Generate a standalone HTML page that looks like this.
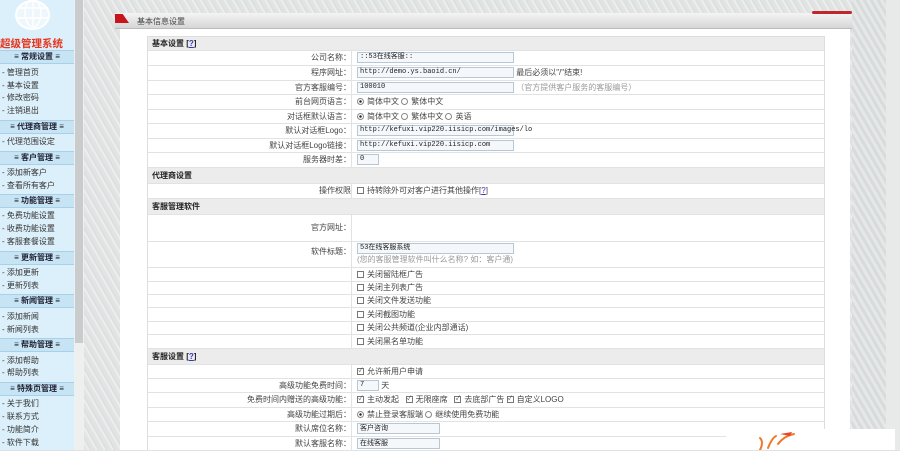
<!DOCTYPE html>
<html><head><meta charset="utf-8">
<style>
*{margin:0;padding:0;box-sizing:border-box}
body{width:900px;height:450px;overflow:hidden;position:relative;background:#e0e2e2;font-family:"Liberation Sans","Noto Sans CJK SC",sans-serif;font-size:8px;color:#444}
.tex{position:absolute;background:repeating-linear-gradient(60deg,#e2e4e4 0 3px,#eceeee 3px 5px,#dde0e0 5px 7px)}
#side{position:absolute;left:0;top:0;width:74px;height:450px;background:#dcf0fb}
#sb{position:absolute;left:74px;top:0;width:10px;height:450px;background:#eef0f0}
#sbt{position:absolute;left:75px;top:0;width:8px;height:343px;background:#c9cccc}
.sh{position:absolute;left:0;width:74px;height:14px;background:#c6e4f4;border-top:1px solid #a8d0e8;border-bottom:1px solid #a8d0e8;font-weight:bold;text-align:center;line-height:12px;font-size:8px;color:#223}
.si{position:absolute;left:2px;font-size:8px;color:#333;line-height:10px}
#panel{position:absolute;left:120px;top:29px;width:730px;height:421px;background:#fff}
#hdr{position:absolute;left:115px;top:13px;width:737px;height:16px;background:linear-gradient(#f4f4f4,#d6d6d6);border-bottom:1px solid #bbb}
.row{position:absolute;left:147px;width:678px;border-bottom:1px solid #e2e2e2;border-left:1px solid #ddd;border-right:1px solid #ddd;background:#fff}
.hd{background:#ececec;font-weight:bold;padding-left:4px;font-size:8px;color:#222}
.lb{position:absolute;left:0;width:203px;text-align:right;top:0;color:#444}
.vl{position:absolute;left:203px;top:0;bottom:0;border-left:1px solid #e2e2e2;padding-left:5px;white-space:nowrap}
.in{display:inline-block;border:1px solid #b7c7d6;background:#f4f8fb;height:11px;vertical-align:middle;font-family:"Liberation Mono","Noto Sans CJK SC",monospace;font-size:7px;line-height:9px;padding-left:2px;color:#222}
.cb{display:inline-block;width:7px;height:7px;border:1px solid #777;background:#fff;vertical-align:middle;margin-right:3px;font-size:6px;line-height:5px;text-align:center}
.rd{display:inline-block;width:7px;height:7px;border:1px solid #888;border-radius:50%;vertical-align:middle;margin-right:3px;background:#fff}
.rd.on{background:radial-gradient(#222 30%,#fff 40%)}
.g{color:#999}
.q{color:#33c;text-decoration:underline}
</style></head><body>
<div class="tex" style="left:84px;top:0;width:816px;height:450px"></div>
<div class="tex" style="left:852px;top:0;width:34px;height:450px;background:repeating-linear-gradient(60deg,#d8dbdb 0 3px,#e6e8e8 3px 6px)"></div>
<div style="position:absolute;left:886px;top:0;width:14px;height:450px;background:#e8eaea"></div>
<div id="panel"></div>
<div id="hdr"><div style="position:absolute;left:0;top:1px;width:14px;height:9px;background:#c8141b;clip-path:polygon(0 0,55% 0,100% 100%,0 100%)"></div><span style="position:absolute;left:22px;top:3px;color:#444">基本信息设置</span></div>
<div style="position:absolute;left:812px;top:11px;width:40px;height:3px;background:#c0272d;border-radius:2px"></div>

<div id="side">
<div style="position:absolute;left:15px;top:0;width:35px;height:30px;border-radius:50%;background:#eef7fc;border:2px solid #fff"></div>
<svg style="position:absolute;left:15px;top:0" width="36" height="30"><g fill="none" stroke="#fff" stroke-width="1.5"><ellipse cx="18" cy="13" rx="8" ry="14"/><line x1="18" y1="0" x2="18" y2="28"/><line x1="3" y1="8" x2="33" y2="8"/><line x1="2" y1="18" x2="34" y2="18"/></g></svg>
<div style="position:absolute;left:0;top:36px;font-size:10.5px;font-weight:bold;color:#e8341c;white-space:nowrap">超级管理系统</div>
<div class="sh" style="top:50px">≡ 常规设置 ≡</div>
<div class="si" style="top:68px">- 管理首页</div><div class="si" style="top:81px">- 基本设置</div><div class="si" style="top:93px">- 修改密码</div><div class="si" style="top:106px">- 注销退出</div>
<div class="sh" style="top:120px">≡ 代理商管理 ≡</div>
<div class="si" style="top:137px">- 代理范围设定</div>
<div class="sh" style="top:151px">≡ 客户管理 ≡</div>
<div class="si" style="top:168px">- 添加新客户</div><div class="si" style="top:181px">- 查看所有客户</div>
<div class="sh" style="top:194px">≡ 功能管理 ≡</div>
<div class="si" style="top:211px">- 免费功能设置</div><div class="si" style="top:224px">- 收费功能设置</div><div class="si" style="top:237px">- 客服套餐设置</div>
<div class="sh" style="top:251px">≡ 更新管理 ≡</div>
<div class="si" style="top:268px">- 添加更新</div><div class="si" style="top:281px">- 更新列表</div>
<div class="sh" style="top:294px">≡ 新闻管理 ≡</div>
<div class="si" style="top:312px">- 添加新闻</div><div class="si" style="top:325px">- 新闻列表</div>
<div class="sh" style="top:338px">≡ 帮助管理 ≡</div>
<div class="si" style="top:356px">- 添加帮助</div><div class="si" style="top:368px">- 帮助列表</div>
<div class="sh" style="top:382px">≡ 特殊页管理 ≡</div>
<div class="si" style="top:399px">- 关于我们</div><div class="si" style="top:412px">- 联系方式</div><div class="si" style="top:425px">- 功能简介</div><div class="si" style="top:438px">- 软件下载</div>
</div>
<div id="sb"></div><div id="sbt"></div>

<div class="row hd" style="top:36px;height:15px;line-height:14px;border-top:1px solid #ddd">基本设置 [<span class="q">?</span>]</div>
<div class="row" style="top:51px;height:15px;line-height:14px"><span class="lb">公司名称：</span><span class="vl"><span class="in" style="width:157px">::53在线客服::</span></span></div>
<div class="row" style="top:66px;height:15px;line-height:14px"><span class="lb">程序网址：</span><span class="vl"><span class="in" style="width:157px">http://demo.ys.baoid.cn/</span> 最后必须以"/"结束!</span></div>
<div class="row" style="top:81px;height:14px;line-height:13px"><span class="lb">官方客服编号：</span><span class="vl"><span class="in" style="width:157px">100010</span> <span class="g">（官方提供客户服务的客服编号）</span></span></div>
<div class="row" style="top:95px;height:15px;line-height:14px"><span class="lb">前台网页语言：</span><span class="vl"><span class="rd on"></span>简体中文 <span class="rd"></span>繁体中文</span></div>
<div class="row" style="top:110px;height:14px;line-height:13px"><span class="lb">对话框默认语言：</span><span class="vl"><span class="rd on"></span>简体中文 <span class="rd"></span>繁体中文 <span class="rd"></span>英语</span></div>
<div class="row" style="top:124px;height:15px;line-height:14px"><span class="lb">默认对话框Logo：</span><span class="vl"><span class="in" style="width:157px">http://kefuxi.vip220.iisicp.com/images/lo</span></span></div>
<div class="row" style="top:139px;height:14px;line-height:13px"><span class="lb">默认对话框Logo链接：</span><span class="vl"><span class="in" style="width:157px">http://kefuxi.vip220.iisicp.com</span></span></div>
<div class="row" style="top:153px;height:15px;line-height:14px"><span class="lb">服务器时差：</span><span class="vl"><span class="in" style="width:22px">0</span></span></div>
<div class="row hd" style="top:168px;height:16px;line-height:15px">代理商设置</div>
<div class="row" style="top:184px;height:15px;line-height:14px"><span class="lb">操作权限</span><span class="vl"><span class="cb"></span>持转除外可对客户进行其他操作[<span class="q">?</span>]</span></div>
<div class="row hd" style="top:199px;height:16px;line-height:15px">客服管理软件</div>
<div class="row" style="top:215px;height:27px;line-height:26px"><span class="lb">官方网址：</span><span class="vl"></span></div>
<div class="row" style="top:242px;height:26px"><span class="lb" style="top:4px">软件标题：</span><span class="vl" style="padding-top:1px"><span class="in" style="width:157px">53在线客服系统</span><br><span class="g" style="line-height:11px">(您的客服管理软件叫什么名称? 如：客户通)</span></span></div>
<div class="row" style="top:268px;height:14px;line-height:13px"><span class="vl"><span class="cb"></span>关闭留陆框广告</span></div>
<div class="row" style="top:282px;height:13px;line-height:12px"><span class="vl"><span class="cb"></span>关闭主列表广告</span></div>
<div class="row" style="top:295px;height:13px;line-height:12px"><span class="vl"><span class="cb"></span>关闭文件发送功能</span></div>
<div class="row" style="top:308px;height:14px;line-height:13px"><span class="vl"><span class="cb"></span>关闭截图功能</span></div>
<div class="row" style="top:322px;height:13px;line-height:12px"><span class="vl"><span class="cb"></span>关闭公共频道(企业内部通话)</span></div>
<div class="row" style="top:335px;height:14px;line-height:13px"><span class="vl"><span class="cb"></span>关闭黑名单功能</span></div>
<div class="row hd" style="top:349px;height:16px;line-height:15px">客服设置 [<span class="q">?</span>]</div>
<div class="row" style="top:365px;height:14px;line-height:13px"><span class="vl"><span class="cb">✓</span>允许新用户申请</span></div>
<div class="row" style="top:379px;height:14px;line-height:13px"><span class="lb">高级功能免费时间：</span><span class="vl"><span class="in" style="width:22px">7</span> 天</span></div>
<div class="row" style="top:393px;height:15px;line-height:14px"><span class="lb">免费时间内赠送的高级功能：</span><span class="vl"><span class="cb">✓</span>主动发起 &nbsp; <span class="cb">✓</span>无限座席 &nbsp; <span class="cb">✓</span>去底部广告 <span class="cb">✓</span>自定义LOGO</span></div>
<div class="row" style="top:408px;height:14px;line-height:13px"><span class="lb">高级功能过期后：</span><span class="vl"><span class="rd on"></span>禁止登录客服端 <span class="rd"></span>继续使用免费功能</span></div>
<div class="row" style="top:422px;height:15px;line-height:14px"><span class="lb">默认席位名称：</span><span class="vl"><span class="in" style="width:83px;font-family:'Liberation Sans','Noto Sans CJK SC',sans-serif">客户咨询</span></span></div>
<div class="row" style="top:437px;height:14px;line-height:13px"><span class="lb">默认客服名称：</span><span class="vl"><span class="in" style="width:83px;font-family:'Liberation Sans','Noto Sans CJK SC',sans-serif">在线客服</span></span></div>

<div style="position:absolute;left:726px;top:429px;width:169px;height:21px;background:#fff"></div>
<svg style="position:absolute;left:750px;top:430px" width="50" height="20"><g fill="none" stroke="#f07a2a" stroke-width="2" stroke-linecap="round"><path d="M10 20 Q14 12 10 8"/><path d="M18 18 Q22 8 26 6"/><path d="M28 14 Q34 6 44 4"/></g><path d="M30 4 L42 2 L40 6Z" fill="#e8452a"/></svg>
</body></html>
